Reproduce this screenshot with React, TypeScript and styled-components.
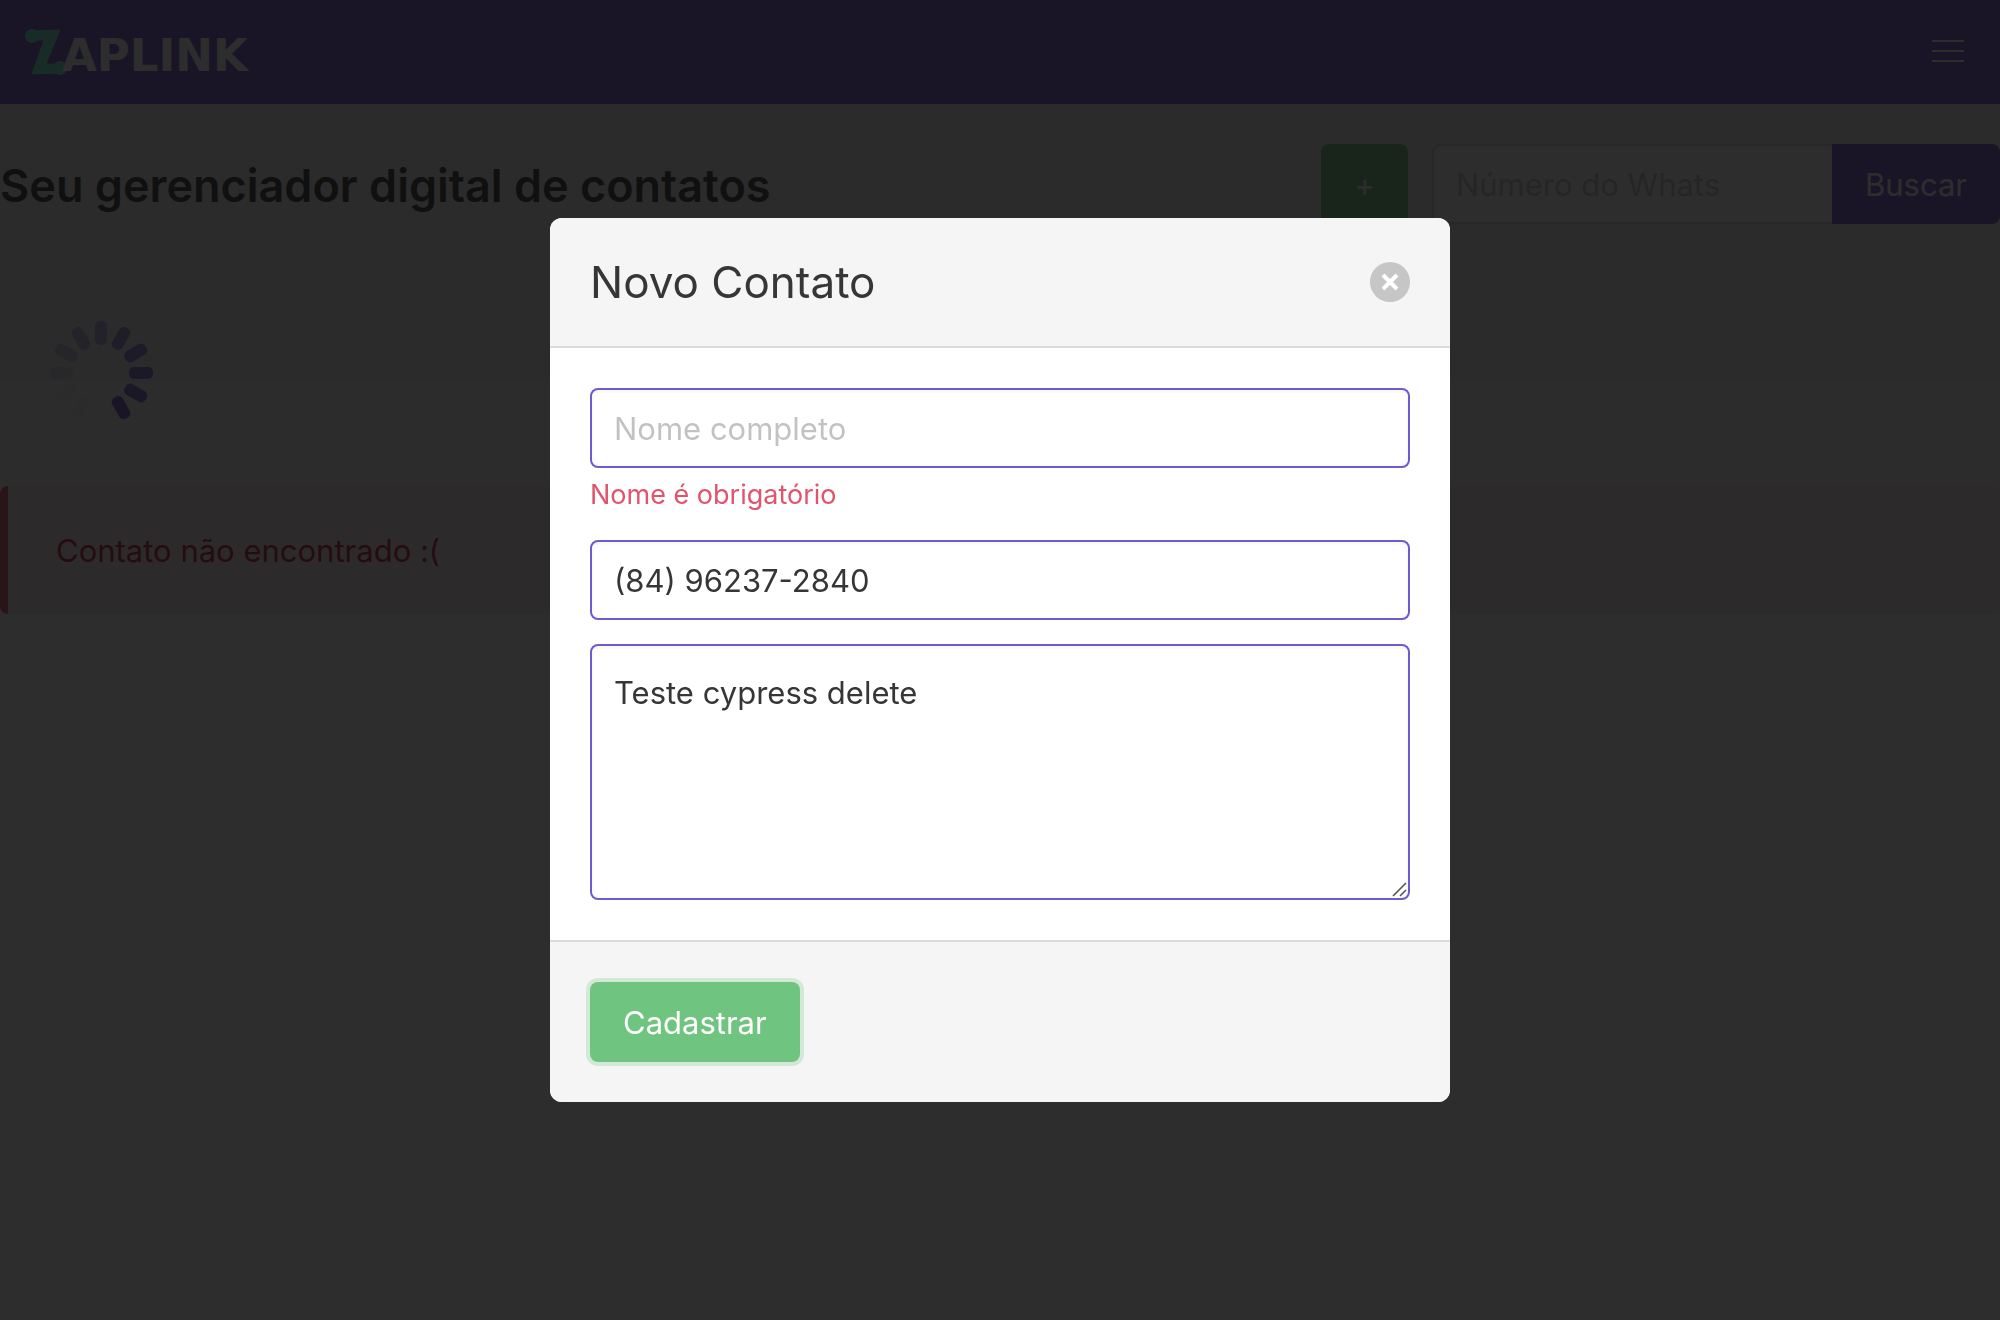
import React, { useState } from "react";
import styled, { createGlobalStyle } from "styled-components";

const PURPLE = "#7159d0";
const GREEN = "#6fc57f";
const MINT = "#6af0cc";

const GlobalStyle = createGlobalStyle`
  *, *::before, *::after { box-sizing: border-box; }
  html { background: #ffffff; }
  body {
    margin: 0;
    color: #4a4a4a;
    font-family: Inter, "Liberation Sans", sans-serif;
    font-size: 31px;
    line-height: 48px;
  }
  h1, h2, p { margin: 0; }
  button, input, textarea { font: inherit; margin: 0; }
`;

const Navbar = styled.nav`
  display: flex;
  align-items: center;
  justify-content: space-between;
  height: 104px;
  background: ${PURPLE};
`;

const Brand = styled.a`
  display: flex;
  align-items: center;
  padding-left: 24px;
  color: #ffffff;
  text-decoration: none;
`;

const BrandMark = styled.svg`
  width: 44px;
  height: 48px;
  margin-right: -6px;
  fill: ${MINT};
`;

const BrandName = styled.span`
  padding-top: 8px;
  font: bold 45px/52px "DejaVu Sans", sans-serif;
`;

const Burger = styled.button`
  display: flex;
  flex-direction: column;
  align-items: center;
  justify-content: center;
  gap: 8px;
  width: 104px;
  height: 104px;
  padding: 0 0 2px;
  border: 0;
  background: none;
`;

const BurgerLine = styled.span`
  width: 32px;
  height: 2px;
  background: #ffffff;
`;

const Main = styled.main`
  padding-top: 40px;
  background: linear-gradient(#f0f0f0 278px, #f7f7f7 278px);
`;

const Toolbar = styled.header`
  display: flex;
  align-items: center;
  justify-content: space-between;
`;

const PageTitle = styled.h1`
  padding-top: 3px;
  color: #363636;
  font-size: 45px;
  font-weight: 600;
  line-height: 56px;
`;

const Actions = styled.div`
  display: flex;
  gap: 24px;
`;

const SearchForm = styled.form`
  display: flex;
`;

const Button = styled.button<{ $tone: "green" | "purple"; $attached?: boolean; $focused?: boolean }>`
  height: 80px;
  padding: 2px 33px 0;
  border: 0;
  border-radius: ${(p) => (p.$attached ? "0 8px 8px 0" : "8px")};
  background: ${(p) => (p.$tone === "green" ? GREEN : PURPLE)};
  box-shadow: ${(p) => (p.$focused ? "0 0 0 4px rgba(111, 197, 127, 0.25)" : "none")};
  color: #ffffff;
`;

const Field = styled.input<{ $search?: boolean }>`
  display: block;
  width: ${(p) => (p.$search ? "400px" : "100%")};
  height: 80px;
  padding: 0 22px;
  border: 2px solid ${(p) => (p.$search ? "#dbdbdb" : PURPLE)};
  border-right-width: ${(p) => (p.$search ? "0" : "2px")};
  border-radius: ${(p) => (p.$search ? "8px 0 0 8px" : "8px")};
  background: #ffffff;
  box-shadow: inset 0 1px 4px rgba(10, 10, 10, 0.05);
  color: #363636;
  outline: none;

  &::placeholder { color: rgba(54, 54, 54, 0.3); opacity: 1; }
`;

const Spinner = styled.svg`
  display: block;
  width: 200px;
  height: 200px;
  margin: 48px 0 14px;
  fill: ${PURPLE};
`;

const Message = styled.article`
  padding: 41px 48px 39px;
  border-left: 8px solid #e05467;
  border-radius: 8px;
  background: #fbebed;
  color: #be2237;
`;

const Overlay = styled.div`
  position: fixed;
  inset: 0;
  display: flex;
  align-items: center;
  justify-content: center;
  background: rgba(10, 10, 10, 0.86);
`;

const Card = styled.form`
  width: 900px;
  max-width: 100%;
  overflow: hidden;
  border-radius: 12px;
  background: #ffffff;
`;

const CardHead = styled.header`
  display: flex;
  align-items: center;
  justify-content: space-between;
  padding: 40px;
  border-bottom: 2px solid #dbdbdb;
  background: #f5f5f5;
`;

const CardTitle = styled.h2`
  color: #363636;
  font-size: 44px;
  font-weight: 400;
  line-height: 48px;
`;

const CloseButton = styled.button`
  display: grid;
  place-items: center;
  width: 40px;
  height: 40px;
  padding: 0;
  border: 0;
  border-radius: 50%;
  background: rgba(10, 10, 10, 0.2);
`;

const CardBody = styled.section`
  display: flex;
  flex-direction: column;
  gap: 24px;
  padding: 40px;
`;

const ErrorText = styled.p`
  padding: 7px 0 1px;
  color: #e2546d;
  font-size: 27px;
  line-height: 40px;
`;

const NotesBox = styled.div`
  position: relative;
`;

const Notes = styled.textarea`
  display: block;
  width: 100%;
  height: 256px;
  padding: 23px 22px;
  border: 2px solid ${PURPLE};
  border-radius: 8px;
  background: #ffffff;
  box-shadow: inset 0 1px 4px rgba(10, 10, 10, 0.05);
  color: #363636;
  outline: none;
  resize: none;
`;

const Grip = styled.svg`
  position: absolute;
  right: 2px;
  bottom: 2px;
  width: 18px;
  height: 18px;
  stroke: #555555;
  stroke-width: 1.6;
  pointer-events: none;
`;

const CardFoot = styled.footer`
  padding: 40px;
  border-top: 2px solid #dbdbdb;
  background: #f5f5f5;
`;

/* Blade opacities, clockwise from twelve o'clock. */
const BLADES = [0.45, 0.64, 0.76, 0.86, 0.93, 1, 0.01, 0.03, 0.06, 0.2, 0.3, 0.38];

export default function App() {
  const [name, setName] = useState("");
  const [phone, setPhone] = useState("(84) 96237-2840");
  const [notes, setNotes] = useState("Teste cypress delete");

  return (
    <>
      <GlobalStyle />
      <Navbar>
        <Brand href="#" aria-label="Zaplink">
          <BrandMark viewBox="0 0 44 48" aria-hidden="true">
            <circle cx="8" cy="8" r="7" />
            <circle cx="36" cy="40" r="7" />
            <path d="M10 3 L36 2 L22 36 L36 36 L35 45 L8 46 L20 12 L10 12 Z" stroke={MINT} strokeLinejoin="round" />
          </BrandMark>
          <BrandName>APLINK</BrandName>
        </Brand>
        <Burger type="button" aria-label="Menu">
          <BurgerLine />
          <BurgerLine />
          <BurgerLine />
        </Burger>
      </Navbar>

      <Main>
        <Toolbar>
          <PageTitle>Seu gerenciador digital de contatos</PageTitle>
          <Actions>
            <Button type="button" $tone="green">+</Button>
            <SearchForm onSubmit={(e) => e.preventDefault()}>
              <Field $search aria-label="Número do Whats" placeholder="Número do Whats" />
              <Button type="submit" $tone="purple" $attached>Buscar</Button>
            </SearchForm>
          </Actions>
        </Toolbar>
        <Spinner viewBox="0 0 200 200" role="img" aria-label="Carregando">
          {BLADES.map((opacity, i) => (
            <rect
              key={i}
              x="95"
              y="49"
              width="12"
              height="24"
              rx="5"
              opacity={opacity}
              transform={`rotate(${i * 30} 101 101)`}
            />
          ))}
        </Spinner>
        <Message>Contato não encontrado :(</Message>
      </Main>

      <Overlay>
        <Card role="dialog" aria-label="Novo Contato" onSubmit={(e) => e.preventDefault()}>
          <CardHead>
            <CardTitle>Novo Contato</CardTitle>
            <CloseButton type="button" aria-label="Fechar">
              <svg width="20" height="20" viewBox="0 0 20 20" stroke="#ffffff" strokeWidth="4">
                <path d="M3 3 L17 17 M17 3 L3 17" />
              </svg>
            </CloseButton>
          </CardHead>
          <CardBody>
            <div>
              <Field aria-label="Nome completo" placeholder="Nome completo" value={name} onChange={(e) => setName(e.target.value)} />
              <ErrorText>Nome é obrigatório</ErrorText>
            </div>
            <Field aria-label="Whats" value={phone} onChange={(e) => setPhone(e.target.value)} />
            <NotesBox>
              <Notes aria-label="Assunto" value={notes} onChange={(e) => setNotes(e.target.value)} />
              <Grip viewBox="0 0 18 18" aria-hidden="true">
                <path d="M3 16 L16 3 M10 16 L16 10" />
              </Grip>
            </NotesBox>
          </CardBody>
          <CardFoot>
            <Button type="submit" $tone="green" $focused>Cadastrar</Button>
          </CardFoot>
        </Card>
      </Overlay>
    </>
  );
}
